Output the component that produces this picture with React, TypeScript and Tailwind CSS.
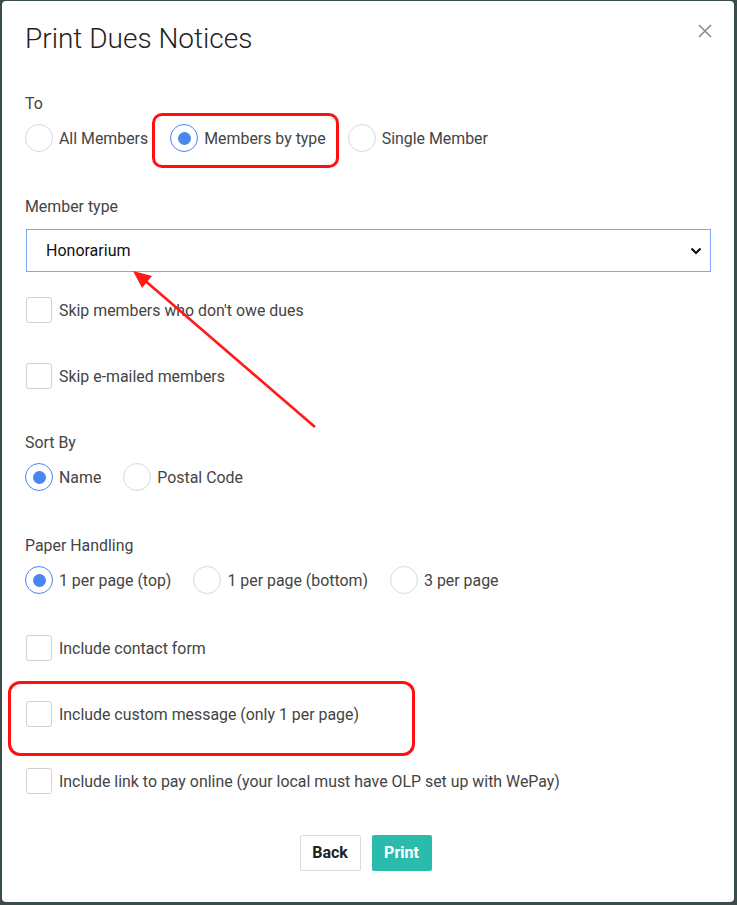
import React from "react";

const font = { fontFamily: "Roboto, 'Noto Sans', Arial, sans-serif" };

function Radio({ label, checked, className = "" }: { label: string; checked?: boolean; className?: string }) {
  return (
    <label className={`flex items-center gap-[6px] mr-[22px] ${className}`}>
      <span
        className={`w-[28px] h-[28px] rounded-full border flex items-center justify-center bg-white ${
          checked ? "border-[#4a86f0]" : "border-[#dadada]"
        }`}
      >
        {checked && <span className="w-[13px] h-[13px] rounded-full bg-[#4a86f0]" />}
      </span>
      <span className="text-[15.9px] leading-[20px] text-[#444] pt-[1px]">{label}</span>
    </label>
  );
}

function Check({ label, className = "" }: { label: string; className?: string }) {
  return (
    <label className={`flex items-center gap-[7px] h-[28px] ${className}`}>
      <span className="w-[26px] h-[26px] rounded-[3px] border border-[#d2d2d2] bg-white ml-[1px]" />
      <span className="text-[15.9px] leading-[20px] text-[#444] pt-[1px]">{label}</span>
    </label>
  );
}

function Label({ children, className = "" }: { children: React.ReactNode; className?: string }) {
  return <div className={`text-[15.9px] leading-[20px] text-[#444] ${className}`}>{children}</div>;
}

export default function App() {
  return (
    <div className="w-[737px] h-[905px] bg-[#3b4d4b] pl-[2px] pt-[1px] overflow-hidden" style={font}>
      <div className="relative w-[732px] h-[901px] bg-white rounded-[4px] pl-[23px] pr-[23px] pt-[21px]">
        {/* header */}
        <div className="flex items-center justify-between h-[32px]">
          <h2 className="text-[28px] leading-[32px] font-light text-[#222] pt-[1px]">Print Dues Notices</h2>
        </div>
        <button className="absolute left-[695px] top-[22px] w-[16px] h-[16px] text-[#8a8a8a]" aria-label="Close">
          <svg viewBox="0 0 16 16" width="16" height="16" fill="none" stroke="currentColor" strokeWidth="1.6">
            <path d="M2 2 L14 14 M14 2 L2 14" />
          </svg>
        </button>

        <Label className="mt-[40px]">To</Label>
        <div className="flex items-center mt-[10px] h-[28px]">
          <Radio label="All Members" />
          <Radio label="Members by type" checked />
          <Radio label="Single Member" />
        </div>

        <Label className="mt-[45px]">Member type</Label>
        <div className="mt-[12px] ml-[1px] h-[43px] w-[685px] border border-[#7fa6f2] flex items-center justify-between pl-[19px] pr-[8px]">
          <span className="text-[16px] text-[#111]">Honorarium</span>
          <svg viewBox="0 0 12 8" width="12" height="8" fill="none" stroke="#111" strokeWidth="2.2">
            <path d="M1.5 1.5 L6 6 L10.5 1.5" />
          </svg>
        </div>

        <Check label="Skip members who don't owe dues" className="mt-[24px]" />
        <Check label="Skip e-mailed members" className="mt-[38px]" />

        <Label className="mt-[43px]">Sort By</Label>
        <div className="flex items-center mt-[10px] h-[28px]">
          <Radio label="Name" checked />
          <Radio label="Postal Code" />
        </div>

        <Label className="mt-[45px]">Paper Handling</Label>
        <div className="flex items-center mt-[10px] h-[28px]">
          <Radio label="1 per page (top)" checked />
          <Radio label="1 per page (bottom)" />
          <Radio label="3 per page" />
        </div>

        <Check label="Include contact form" className="mt-[40px]" />
        <Check label="Include custom message (only 1 per page)" className="mt-[38px]" />
        <Check label="Include link to pay online (your local must have OLP set up with WePay)" className="mt-[39px]" />

        <div className="flex justify-center gap-[11px] mt-[40px] pr-[5px]">
          <button className="w-[61px] h-[36px] border border-[#dcdcdc] rounded-[2px] bg-white text-[16px] font-bold text-[#222]">
            Back
          </button>
          <button className="w-[60px] h-[36px] rounded-[2px] bg-[#2bbbad] text-[16px] font-bold text-white">
            Print
          </button>
        </div>

        {/* annotation marks */}
        <div className="absolute left-[150px] top-[112px] w-[187px] h-[55px] border-[3px] border-[#ff1010] rounded-[10px] pointer-events-none" />
        <div className="absolute left-[6px] top-[680px] w-[407px] h-[75px] border-[3px] border-[#ff1010] rounded-[12px] pointer-events-none" />
        <svg className="absolute left-0 top-0 pointer-events-none" width="732" height="901">
          <line x1="313" y1="426" x2="140" y2="277" stroke="#ff1a1a" strokeWidth="2.6" />
          <polygon points="131,270 150,275 140,287" fill="#ff1a1a" />
        </svg>
      </div>
    </div>
  );
}
